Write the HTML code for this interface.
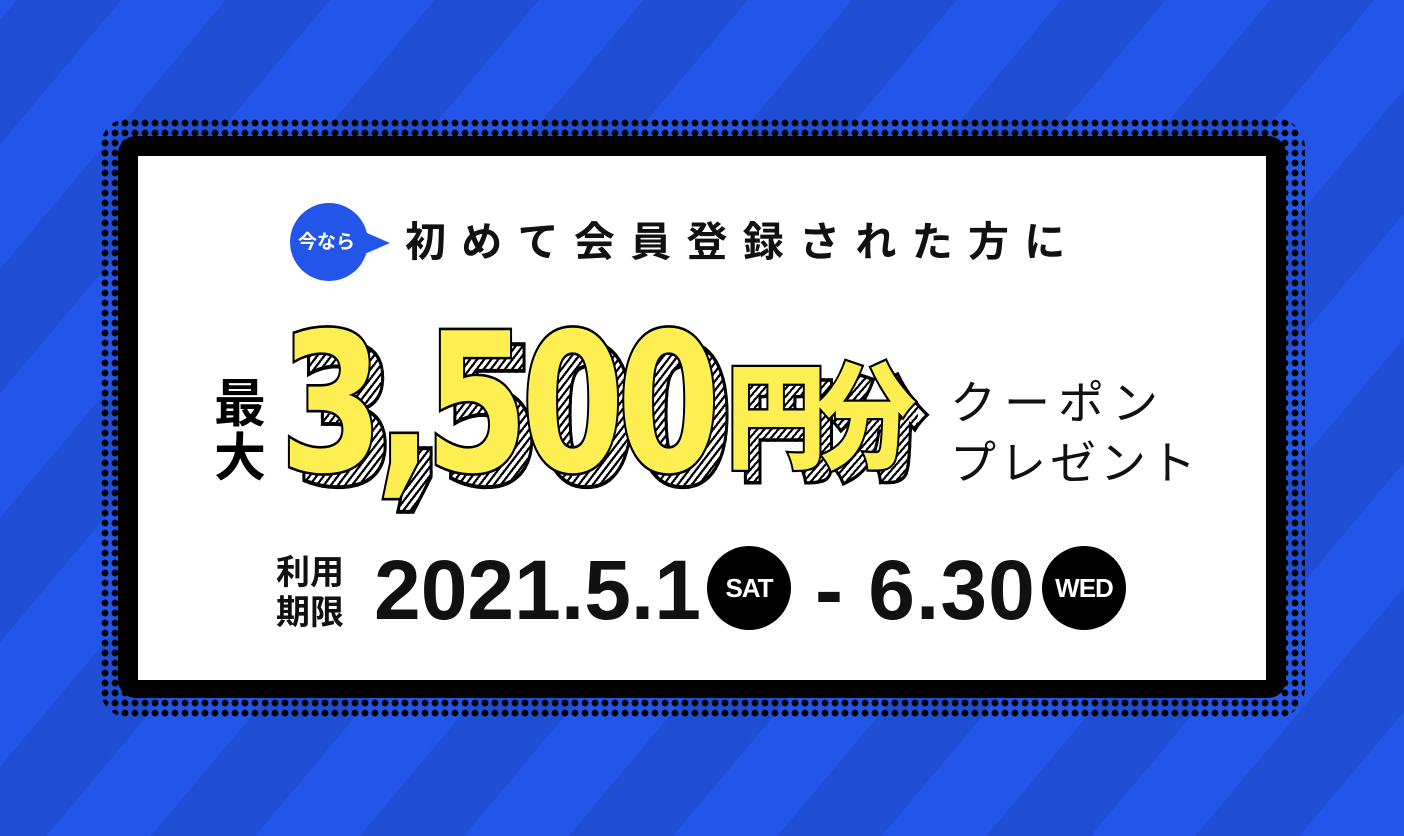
<!DOCTYPE html>
<html><head><meta charset="utf-8"><style>
*{margin:0;padding:0;box-sizing:border-box}
body{width:1404px;height:836px;overflow:hidden;position:relative;
background:repeating-linear-gradient(-50deg,#2356e8 0 80px,#1f4dd4 80px 160px);
font-family:"Liberation Sans","Noto Sans CJK JP",sans-serif;}
.dots{position:absolute;left:100px;top:118px;width:1205px;height:600px;border-radius:30px;
background-image:radial-gradient(#000 45%,transparent 50%);background-size:10px 10px;}
.frame{position:absolute;left:118px;top:136px;width:1168px;height:562px;background:#000;border-radius:18px}
.white{position:absolute;left:138px;top:156px;width:1128px;height:524px;background:#fff}
.a{position:absolute;white-space:nowrap;line-height:1}
.bub{position:absolute;left:290px;top:203px;width:78px;height:78px;border-radius:50%;background:#2356e8}
.tail{position:absolute;left:360px;top:230px;width:0;height:0;border-top:13px solid transparent;border-bottom:13px solid transparent;border-left:30px solid #2356e8}
.big{font-family:"DejaVu Sans",sans-serif;font-weight:bold;transform-origin:0 0}
.hat{color:transparent;background:repeating-linear-gradient(-45deg,#000 0 2px,#fff 2px 5px);-webkit-background-clip:text;background-clip:text;-webkit-text-stroke:3px #000}
.yel{color:#fdee52;-webkit-text-stroke:4px #000;paint-order:stroke fill}
.circ{position:absolute;width:84px;height:84px;border-radius:50%;background:#000;color:#fff;font-weight:bold;font-size:26px;text-align:center;line-height:84px;letter-spacing:-1px}
.cj{transform-origin:0 0;transform:scaleY(1.15)}
</style></head><body>
<div class="dots"></div>
<div class="frame"></div>
<div class="white"></div>
<div class="bub"></div><div class="tail"></div>
<div class="a" style="left:298px;top:233px;font-size:19px;font-weight:bold;color:#fff">今なら</div>
<div class="a" style="left:405px;top:222px;font-size:41px;font-weight:bold;letter-spacing:15.3px;color:#111">初めて会員登録された方に</div>

<div class="a" style="left:214px;top:378px;font-size:52px;font-weight:bold;line-height:54px;color:#000">最<br>大</div>

<div class="a big hat" style="left:294px;top:322px;font-size:148px;letter-spacing:-7px;transform:scaleY(1.3)">3,500</div>
<div class="a big yel" style="left:280px;top:308px;font-size:148px;letter-spacing:-7px;transform:scaleY(1.3)">3,500</div>
<div class="a hat cj" style="left:738px;top:375px;font-size:100px;font-weight:900;letter-spacing:-10px">円分</div>
<div class="a yel cj" style="left:726px;top:362px;font-size:100px;font-weight:900;letter-spacing:-10px">円分</div>

<div class="a" style="left:950px;top:380px;font-size:46px;letter-spacing:8px;color:#111">クーポン</div>
<div class="a" style="left:950px;top:440px;font-size:46px;letter-spacing:4px;color:#111">プレゼント</div>

<div class="a" style="left:276px;top:553px;font-size:34px;font-weight:bold;line-height:40px;color:#111">利用<br>期限</div>
<div class="a" style="left:374px;top:548px;font-size:84px;font-weight:bold;letter-spacing:0px;color:#111">2021.5.1</div>
<div class="circ" style="left:707px;top:546px">SAT</div>
<div class="a" style="left:815px;top:548px;font-size:84px;font-weight:bold;letter-spacing:1px;color:#111">-&nbsp;6.30</div>
<div class="circ" style="left:1042px;top:546px">WED</div>
</body></html>
